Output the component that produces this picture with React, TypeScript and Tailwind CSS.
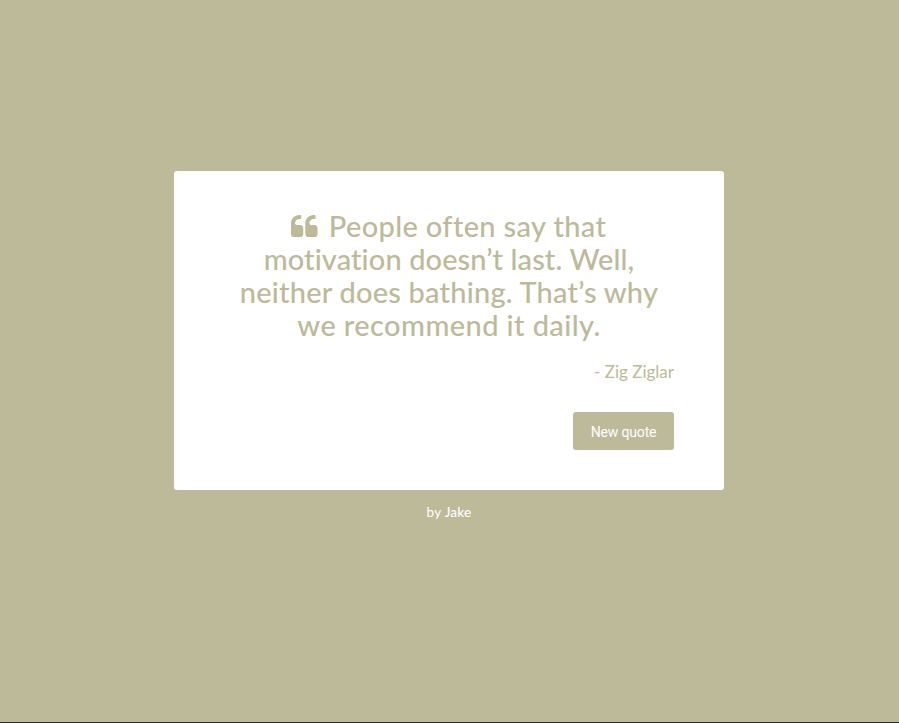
import React from "react";

function QuoteIcon() {
  return (
    <svg viewBox="0 0 1792 1792" fill="currentColor" aria-hidden="true" className="-ml-[1.5px] mr-[10px] mt-1 h-7 w-[28.6px]" preserveAspectRatio="none">
      <path d="M832 960v384q0 80-56 136t-136 56h-384q-80 0-136-56t-56-136v-704q0-104 40.5-198.5t109.5-163.5 163.5-109.5 198.5-40.5h64q26 0 45 19t19 45v128q0 26-19 45t-45 19h-64q-106 0-181 75t-75 181v32q0 40 28 68t68 28h224q80 0 136 56t56 136zM1728 960v384q0 80-56 136t-136 56h-384q-80 0-136-56t-56-136v-704q0-104 40.5-198.5t109.5-163.5 163.5-109.5 198.5-40.5h64q26 0 45 19t19 45v128q0 26-19 45t-45 19h-64q-106 0-181 75t-75 181v32q0 40 28 68t68 28h224q80 0 136 56t56 136z" />
    </svg>
  );
}

export default function App() {
  return (
    <main className="flex h-[723px] w-full flex-col items-center border-b border-[#2b2b2b] bg-[#bdba99] pr-px pt-[171px] font-['Lato','Open_Sans',sans-serif]">
      <section className="flex h-[319px] w-[550px] flex-col rounded-[3px] bg-white px-[50px] pt-[38px] text-[#bdba99]">
        <blockquote className="flex flex-col items-center whitespace-nowrap text-[29px] font-medium leading-[33px] [font-variant-ligatures:none]">
          <div className="flex">
            <QuoteIcon />
            <span className="tracking-[0.35px]">People often say that</span>
          </div>
          <span className="tracking-[0.1px]">motivation doesn’t last. Well,</span>
          <span className="tracking-[0.2px]">neither does bathing. That’s why</span>
          <span className="tracking-[0.4px]">we recommend it daily.</span>
        </blockquote>
        <p className="mt-[21px] text-right text-[17px] leading-[20px]">- Zig Ziglar</p>
        <button className="mt-[30px] h-[38px] w-[101px] self-end rounded-[3px] bg-[#bdba99] pt-0.5 font-['Roboto',sans-serif] text-[14px] tracking-[-0.15px] text-white">New quote</button>
      </section>
      <footer className="mt-[14px] text-[13.5px] leading-4 tracking-[0.2px] text-white">by <a className="font-medium">Jake</a></footer>
    </main>
  );
}
